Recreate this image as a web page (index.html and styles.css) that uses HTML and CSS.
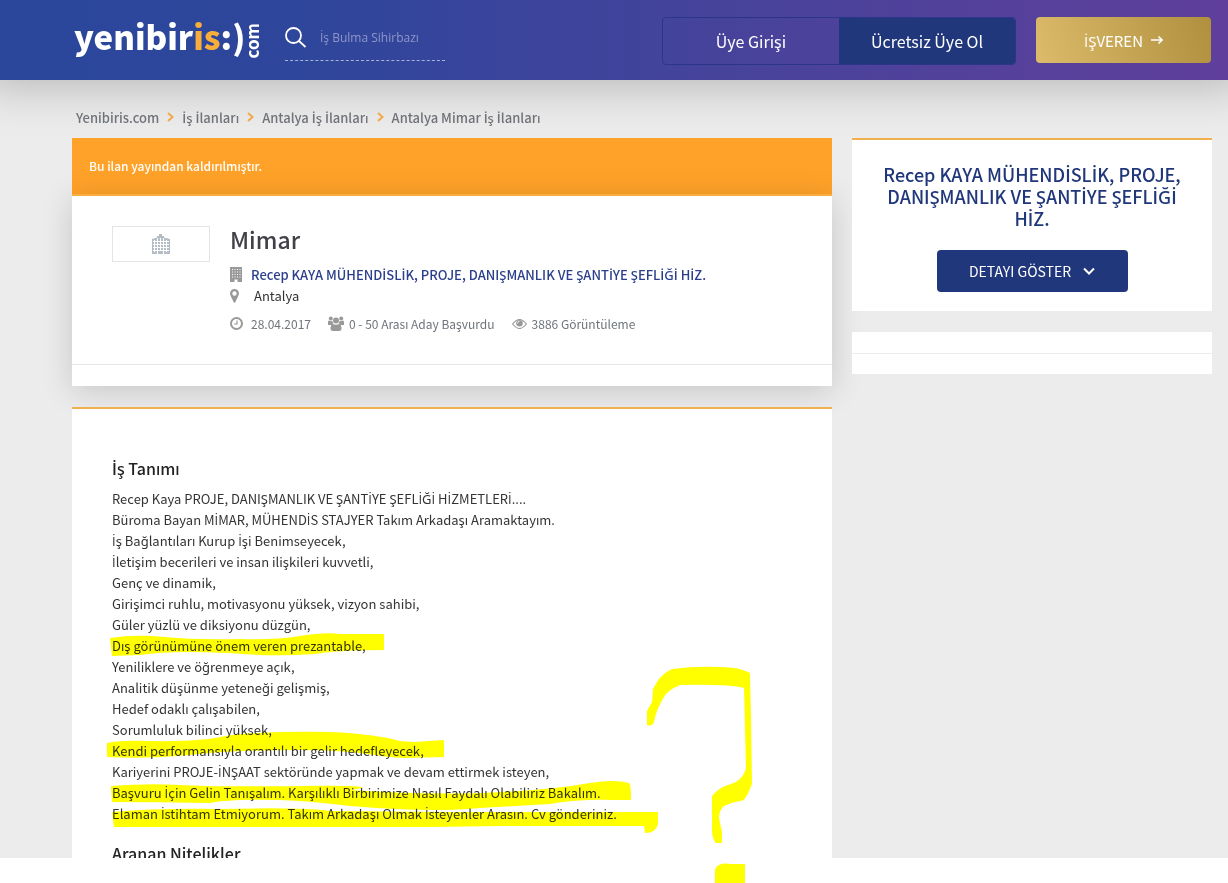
FILE: index.html
```html
<!DOCTYPE html>
<html lang="tr">
<head>
    <meta charset="UTF-8">
    <meta name="viewport" content="width=device-width, initial-scale=1.0">
    <title>Mimar - Yenibiris.com</title>
    <link rel="stylesheet" href="styles.css">
</head>
<body>
    <div class="page">
        <header class="header">
            <a href="/" class="logo"><span>yenibir<span class="logo-is">is</span>:)</span><span class="logo-com">com</span></a>
            <form class="search">
                <label for="q" class="search-label" aria-label="Ara">
                    <svg width="22" height="22" viewBox="0 0 22 22" fill="none" stroke="#fff" stroke-width="1.800"><circle cx="8.500" cy="8.500" r="7.500"/><path d="M14 14L20.500 20"/></svg>
                </label>
                <input type="text" id="q" class="search-input" placeholder="İş Bulma Sihirbazı">
            </form>
            <div class="auth">
                <a href="/giris" class="auth-link">Üye Girişi</a>
                <a href="/uye-ol" class="auth-link auth-link-dark">Ücretsiz Üye Ol</a>
            </div>
            <a href="/isveren" class="employer"><span><span class="di">İ</span>ŞVEREN</span>
                <svg width="12" height="10" viewBox="0 0 12 10" fill="none" stroke="#fff" stroke-width="1.600"><path d="M0 5H11M7.500 1.500L11 5L7.500 8.500"/></svg>
            </a>
        </header>

        <main class="content">
            <nav class="breadcrumb">
                <a href="/">Yenibiris.com</a>
                <svg class="crumb-arrow" viewBox="0 0 7 10"><path d="M1 1L5.500 5L1 9"/></svg>
                <a href="/is-ilanlari"><span class="di">İ</span>ş <span class="di">İ</span>lanları</a>
                <svg class="crumb-arrow" viewBox="0 0 7 10"><path d="M1 1L5.500 5L1 9"/></svg>
                <a href="/antalya">Antalya <span class="di">İ</span>ş <span class="di">İ</span>lanları</a>
                <svg class="crumb-arrow" viewBox="0 0 7 10"><path d="M1 1L5.500 5L1 9"/></svg>
                <a href="/antalya-mimar">Antalya Mimar <span class="di">İ</span>ş <span class="di">İ</span>lanları</a>
            </nav>

            <div class="columns">
                <div class="main-col">
                    <div class="alert">Bu ilan yayından kaldırılmıştır.</div>

                    <section class="job-card">
                        <div class="job-head">
                            <div class="company-logo">
                                <svg width="18" height="20" viewBox="0 0 18 20"><path fill="#b4bdc5" d="M0 5l5-1.500V2h2V0h3v2h2v1.500L18 5v15H0z"/><path stroke="#fff" stroke-width="1" d="M2.500 6v12M5.500 4v16M8.500 4v13M11.500 4v16M14.500 6v12M1 7.500h16M1 10.500h16M1 13.500h16M1 16.500h16"/></svg>
                            </div>
                            <div class="job-info">
                                <h1 class="job-title">Mimar</h1>
                                <div class="job-row job-company">
                                    <svg class="icon" width="12" height="15" viewBox="0 0 12 15"><path fill="#999" d="M0 0h12v15H7.500v-2.500h-3V15H0z"/><path stroke="#fff" stroke-width="1" stroke-dasharray="1 1.500" d="M2 2.500h9M2 5h9M2 7.500h9M2 10h9"/></svg>
                                    <a href="/firma">Recep KAYA MÜHEND<span class="di">İ</span>SL<span class="di">İ</span>K, PROJE, DANIŞMANLIK VE ŞANT<span class="di">İ</span>YE ŞEFL<span class="di">İ</span>Ğ<span class="di">İ</span> H<span class="di">İ</span>Z.</a>
                                </div>
                                <div class="job-row job-city">
                                    <svg class="icon" width="9" height="14" viewBox="0 0 9 14"><path fill="#999" fill-rule="evenodd" d="M4.500 0A4.500 4.500 0 0 0 0 4.500C0 6.500 2 9 3.500 13q1 1.500 2 0C7 9 9 6.500 9 4.500A4.500 4.500 0 0 0 4.500 0zm0 2.300a2.200 2.200 0 1 1 0 4.400 2.200 2.200 0 0 1 0-4.400z"/></svg>
                                    <span>Antalya</span>
                                </div>
                                <ul class="job-stats">
                                    <li>
                                        <svg class="icon" width="13" height="13" viewBox="0 0 13 13" fill="none" stroke="#999"><circle cx="6.500" cy="6.500" r="5.500" stroke-width="2"/><path d="M7 3.500V7H4" stroke-width="1.200"/></svg>
                                        28.04.2017
                                    </li>
                                    <li class="stat-people">
                                        <svg width="16" height="15" viewBox="0 0 16 15" fill="#999"><circle cx="2.800" cy="2.500" r="2"/><circle cx="13.200" cy="2.500" r="2"/><circle cx="8" cy="4.500" r="3"/><path d="M0 9V6q0-1.500 1-1.500 2 1 3.300.3Q4.500 6.500 5.500 7.500 4 7.700 3.500 9zM16 9V6q0-1.500-1-1.500-2 1-3.300.3-.2 1.700-1.200 2.700 1.500.2 2 1.500zM5 8q3 1.500 6 0 2.300 0 2.500 4.500 0 2.500-2.500 2.500H5q-2.500 0-2.500-2.500Q2.700 8 5 8z"/></svg>
                                        0 - 50 Arası Aday Başvurdu
                                    </li>
                                    <li class="stat-views">
                                        <svg width="15" height="10" viewBox="0 0 15 10" fill="none" stroke="#999"><path d="M.6 5Q7.500-4 14.400 5 7.500 14 .6 5z" stroke-width="1.200"/><circle cx="7.500" cy="4.300" r="3.300" fill="#999" stroke="none"/><path d="M5.500 4.300q0-2 2-2" stroke="#fff" stroke-width=".8"/></svg>
                                        3886 Görüntüleme
                                    </li>
                                </ul>
                            </div>
                        </div>
                        <div class="card-foot"></div>
                    </section>

                    <section class="description">
                        <h2><span class="di">İ</span>ş Tanımı</h2>
                        <p>
                            Recep Kaya PROJE, DANIŞMANLIK VE ŞANT<span class="di">İ</span>YE ŞEFL<span class="di">İ</span>Ğ<span class="di">İ</span> H<span class="di">İ</span>ZMETLER<span class="di">İ</span>....<br>
                            Büroma Bayan M<span class="di">İ</span>MAR, MÜHEND<span class="di">İ</span>S STAJYER Takım Arkadaşı Aramaktayım.<br>
                            <span class="di">İ</span>ş Bağlantıları Kurup <span class="di">İ</span>şi Benimseyecek,<br>
                            <span class="di">İ</span>letişim becerileri ve insan ilişkileri kuvvetli,<br>
                            Genç ve dinamik,<br>
                            Girişimci ruhlu, motivasyonu yüksek, vizyon sahibi,<br>
                            Güler yüzlü ve diksiyonu düzgün,<br>
                            Dış görünümüne önem veren prezantable,<br>
                            Yeniliklere ve öğrenmeye açık,<br>
                            Analitik düşünme yeteneği gelişmiş,<br>
                            Hedef odaklı çalışabilen,<br>
                            Sorumluluk bilinci yüksek,<br>
                            Kendi performansıyla orantılı bir gelir hedefleyecek,<br>
                            Kariyerini PROJE-<span class="di">İ</span>NŞAAT sektöründe yapmak ve devam ettirmek isteyen,<br>
                            Başvuru <span class="di">İ</span>çin Gelin Tanışalım. Karşılıklı Birbirimize Nasıl Faydalı Olabiliriz Bakalım.<br>
                            Elaman <span class="di">İ</span>stihtam Etmiyorum. Takım Arkadaşı Olmak <span class="di">İ</span>steyenler Arasın. Cv gönderiniz.
                        </p>
                        <h2>Aranan Nitelikler</h2>
                    </section>
                </div>

                <aside class="side-col">
                    <section class="company-card">
                        <h2>Recep KAYA MÜHEND<span class="di">İ</span>SL<span class="di">İ</span>K, PROJE, DANIŞMANLIK VE ŞANT<span class="di">İ</span>YE ŞEFL<span class="di">İ</span>Ğ<span class="di">İ</span> H<span class="di">İ</span>Z.</h2>
                        <button type="button" class="detail-btn">DETAYI GÖSTER
                            <svg width="12" height="8" viewBox="0 0 12 8" fill="none" stroke="#fff" stroke-width="2"><path d="M1 1.500L6 6.500L11 1.500"/></svg>
                        </button>
                    </section>
                    <section class="empty-card">
                        <div class="empty-top"></div>
                    </section>
                </aside>
            </div>
        </main>
    </div>

    <!-- highlighter marks -->
    <svg class="marker" width="680" height="256" viewBox="100 627 680 256" fill="#ff0">
        <path d="M110 638Q135 634 165 637T240 639Q275 640 300 636T340 634H384V650Q340 650 315 654 270 657 230 653 170 650 140 655L112 656Z"/>
        <path d="M107 743Q120 740 150 741 200 742 225 736 260 731 330 732 375 734 400 741L414 742 444 740V757L405 758Q385 757 375 755 340 750 300 750 230 750 190 755 150 759 107 757Z"/>
        <path d="M111 786Q150 783 180 785T300 786 350 790Q440 796 500 792 550 790 590 783 615 779 629 783 631 784 631 800H612Q580 799 550 804L480 808Q430 813 350 806 310 801 280 800 230 799 210 803 160 802 112 802Z"/>
        <path d="M112 812Q160 808 220 809 300 807 330 811L450 812H658V824Q656 833 645 833L644 826H500L430 827H114Z"/>
        <path d="M647 725V711L652 702 653 689Q660 674 672 669 695 666 720 667 740 667 750 673L751 720 752 784Q749 793 744 800 733 802 724 806 719 810 719 818L722 832V843H716Q712 839 712 830V796Q718 788 728 785 743 781 746 768L744 688Q730 684 680 685 668 690 664 697 656 710 654 722 652 727 647 725Z"/>
        <path d="M715 869Q719 862 731 864L745 864V883H715Z"/>
    </svg>
</body>
</html>
```
FILE: styles.css
```css
* {
    box-sizing: border-box;
}
body {
    margin: 0;
    background: #fff;
    font-family: "Noto Sans CJK SC", "Noto Sans", sans-serif;
    font-size: 13px;
    line-height: 21px;
    color: #333;
}
a {
    color: inherit;
    text-decoration: none;
}
h1, h2, p, ul {
    margin: 0;
    padding: 0;
}
svg {
    flex: none;
}
/* dotted capital I, missing from the main font */
.di {
    font-family: "Open Sans", sans-serif;
    line-height: 1;
}
h2 .di,
.breadcrumb .di,
.job-company .di {
    font-weight: 600;
}
.page {
    height: calc(100vh - 25px);
    overflow: hidden;
    background: #ececec;
}

/* header */
.header {
    position: relative;
    display: flex;
    align-items: center;
    height: 80px;
    padding: 0 17px 0 74px;
    background: linear-gradient(90deg, #2a479b 0%, #2e469b 25%, #46439b 58%, #5f3f9b 100%);
    box-shadow: 0 -16px 50px 20px rgba(0, 0, 0, 0.25);
    color: #fff;
}
.logo {
    display: flex;
    align-items: center;
    width: 186px;
    margin-bottom: 8px;
    font-size: 33px;
    font-weight: 900;
    line-height: 40px;
}
.logo-is {
    color: #f9ae3c;
}
.logo-com {
    writing-mode: vertical-rl;
    transform: rotate(180deg);
    margin-top: 10px;
    font-size: 17px;
    font-weight: 700;
    line-height: 14px;
}
.search {
    display: flex;
    align-items: center;
    width: 160px;
    height: 46px;
    margin: 0 auto 4px 25px;
    border-bottom: 1px dashed #a9b2dc;
}
.search-label {
    display: flex;
    width: 35px;
}
.search-input {
    width: 125px;
    padding: 0;
    border: 0;
    background: none;
    color: #fff;
    font-family: "Open Sans", sans-serif;
    font-size: 12px;
}
.search-input::placeholder {
    color: #8f96c8;
    opacity: 1;
}
.auth {
    display: flex;
    height: 48px;
    margin: 2px 20px 0 0;
    border: 1px solid #2c3688;
    border-radius: 4px;
    overflow: hidden;
}
.auth-link {
    width: 176px;
    line-height: 46px;
    font-size: 16px;
    text-align: center;
}
.auth-link-dark {
    background: #21377b;
}
.employer {
    display: flex;
    align-items: center;
    justify-content: center;
    gap: 8px;
    width: 175px;
    height: 46px;
    border-radius: 4px;
    background: linear-gradient(70deg, #dcbc6b, #b08f3e);
    font-size: 15px;
}

/* breadcrumb */
.content {
    padding: 26px 16px 0 72px;
}
.breadcrumb {
    position: relative;
    display: flex;
    align-items: center;
    gap: 8px;
    height: 22px;
    margin: 0 0 10px 4px;
    font-weight: 500;
    color: #6f7378;
}
.crumb-arrow {
    width: 7px;
    height: 10px;
    fill: none;
    stroke: #f0a94c;
    stroke-width: 2;
}
.columns {
    display: flex;
    align-items: flex-start;
    gap: 20px;
}
.main-col {
    position: relative;
    flex: 1;
}
.side-col {
    position: relative;
    width: 360px;
}

/* job card */
.alert {
    height: 56px;
    padding: 0 17px;
    background: #ffa229;
    color: #fff;
    font-weight: 500;
    font-size: 12px;
    line-height: 56px;
}
.job-card {
    margin-bottom: 21px;
    border-top: 2px solid #f7ae3d;
    background: #fff;
    box-shadow: 0 5px 30px rgba(0, 0, 0, 0.16);
}
.job-head {
    display: flex;
    gap: 20px;
    padding: 30px 40px;
}
.company-logo {
    display: flex;
    align-items: center;
    justify-content: center;
    width: 98px;
    height: 36px;
    border: 1px solid #e4e4e4;
}
.job-title {
    margin-bottom: 11px;
    font-size: 23px;
    font-weight: 500;
    line-height: 27px;
    color: #414147;
}
.job-row {
    display: flex;
    align-items: center;
}
.job-row .icon {
    margin-right: 9px;
}
.job-company {
    color: #2b3f8c;
    font-weight: 500;
}
.job-city .icon {
    margin-right: 15px;
}
.job-stats {
    display: flex;
    gap: 17px;
    margin-top: 7px;
    list-style: none;
    font-size: 12px;
    color: #6e757c;
}
.job-stats li {
    display: flex;
    align-items: center;
    gap: 8px;
}
.job-stats .stat-people,
.job-stats .stat-views {
    gap: 5px;
}
.card-foot {
    height: 22px;
    border-top: 1px solid #e6e6e6;
}

/* description */
.description {
    padding: 49px 40px;
    border-top: 2px solid #f0b050;
    background: #fff;
}
.description h2 {
    margin-bottom: 9px;
    font-size: 16px;
    font-weight: 500;
    line-height: 21px;
    color: #222;
}
.description p {
    margin-bottom: 19px;
}

/* sidebar */
.company-card {
    margin-bottom: 21px;
    padding: 23px 20px 19px;
    border-top: 2px solid #f0b050;
    background: #fff;
    text-align: center;
}
.company-card h2 {
    margin-bottom: 21px;
    font-size: 18px;
    font-weight: 500;
    line-height: 22px;
    color: #21377b;
}
.detail-btn {
    display: inline-flex;
    align-items: center;
    justify-content: center;
    gap: 12px;
    width: 191px;
    height: 42px;
    border: 0;
    border-radius: 4px;
    background: #21377b;
    color: #fff;
    font: inherit;
    font-size: 14px;
}
.empty-card {
    height: 42px;
    background: #fff;
}
.empty-top {
    height: 22px;
    border-bottom: 1px solid #ececec;
}
.marker {
    position: absolute;
    top: 627px;
    left: 100px;
    mix-blend-mode: multiply;
    pointer-events: none;
}
```
